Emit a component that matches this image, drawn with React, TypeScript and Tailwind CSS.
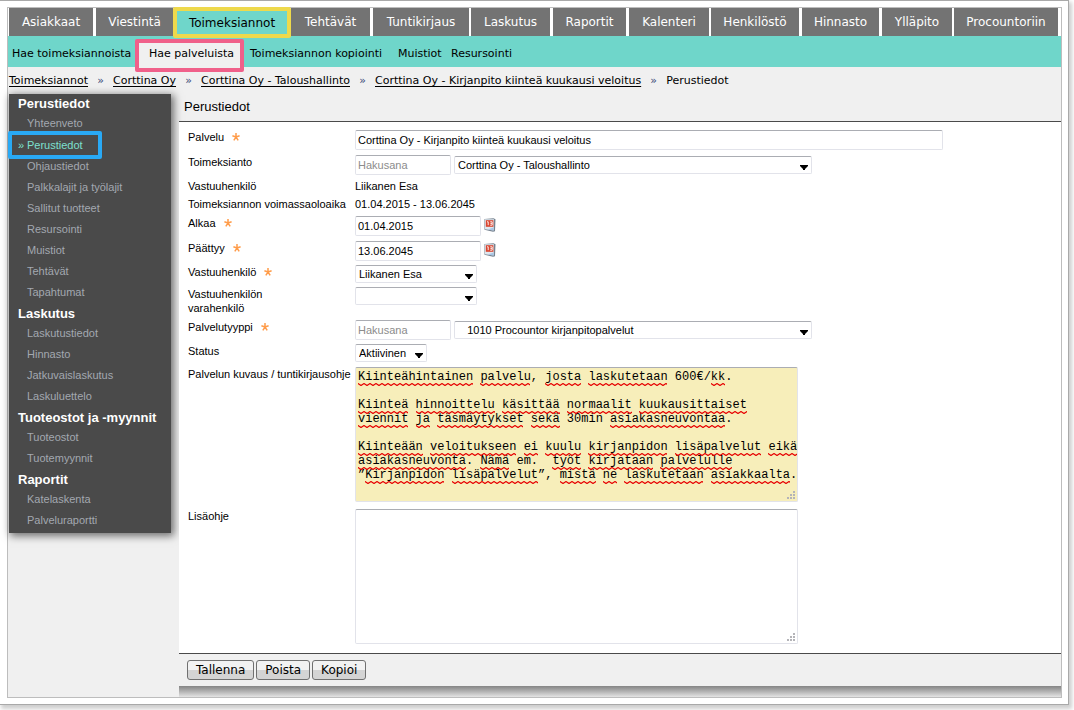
import { useState } from 'react'

interface MenuGroup {
  title: string
  items: string[]
}

const tabs = [
  { label: 'Asiakkaat', width: 'w-[84px] mr-[3px]' },
  { label: 'Viestintä', width: 'w-[77px]' },
  { label: 'Toimeksiannot', width: 'w-[118px]' },
  { label: 'Tehtävät', width: 'w-[79px] mr-[3px]' },
  { label: 'Tuntikirjaus', width: 'w-[96px] mr-[2px]' },
  { label: 'Laskutus', width: 'w-[79px] mr-[3px]' },
  { label: 'Raportit', width: 'w-[73px] mr-[3px]' },
  { label: 'Kalenteri', width: 'w-[80px] mr-[2px]' },
  { label: 'Henkilöstö', width: 'w-[88px] mr-[3px]' },
  { label: 'Hinnasto', width: 'w-[77px] mr-[3px]' },
  { label: 'Ylläpito', width: 'w-[70px] mr-[2px]' },
  { label: 'Procountoriin', width: 'w-[104px] mr-[3px]' },
]

const crumbs = [
  'Toimeksiannot',
  'Corttina Oy',
  'Corttina Oy - Taloushallinto',
  'Corttina Oy - Kirjanpito kiinteä kuukausi veloitus',
]

const menu: MenuGroup[] = [
  {
    title: 'Perustiedot',
    items: [
      'Yhteenveto',
      'Perustiedot',
      'Ohjaustiedot',
      'Palkkalajit ja työlajit',
      'Sallitut tuotteet',
      'Resursointi',
      'Muistiot',
      'Tehtävät',
      'Tapahtumat',
    ],
  },
  { title: 'Laskutus', items: ['Laskutustiedot', 'Hinnasto', 'Jatkuvaislaskutus', 'Laskuluettelo'] },
  { title: 'Tuoteostot ja -myynnit', items: ['Tuoteostot', 'Tuotemyynnit'] },
  { title: 'Raportit', items: ['Katelaskenta', 'Palveluraportti'] },
]

const description = `Kiinteähintainen palvelu, josta laskutetaan 600€/kk.

Kiinteä hinnoittelu käsittää normaalit kuukausittaiset
viennit ja täsmäytykset sekä 30min asiakasneuvontaa.

Kiinteään veloitukseen ei kuulu kirjanpidon lisäpalvelut eikä
asiakasneuvonta. Nämä em.  työt kirjataan palvelulle
”Kirjanpidon lisäpalvelut”, mistä ne laskutetaan asiakkaalta.`

const verdana = "font-['DejaVu_Sans',Verdana,sans-serif]"
const field = 'rounded-[2px] border border-[#e2e3ea] border-t-[#abadb3] bg-white text-[11px] text-black'

// words the spell checker lets through
const knownWords = ['em', 'min']

function Squiggles({ text }: { text: string }) {
  const words = text.split('\n').flatMap((line, row) =>
    [...line.matchAll(/[a-zåäö]+/gi)]
      .filter((m) => !knownWords.includes(m[0]))
      .map((m) => ({ row, col: m.index, length: m[0].length }))
  )
  return (
    <svg className="pointer-events-none absolute inset-0 h-full w-full" aria-hidden="true">
      <defs>
        <pattern id="wave" width="6" height="3" patternUnits="userSpaceOnUse">
          <path d="M-1 0L0 .5L3 2.5L6 .5L7 0" fill="none" stroke="#e60000" strokeWidth="1.2" />
        </pattern>
      </defs>
      {words.map((w) => (
        <svg key={`${w.row}-${w.col}`} x={Math.round(3 + w.col * 7.2)} y={16 + w.row * 14} width={Math.round(w.length * 7.2)} height="3">
          <rect width="100%" height="3" fill="url(#wave)" />
        </svg>
      ))}
    </svg>
  )
}

function Grip() {
  return (
    <svg className="pointer-events-none absolute right-[3px] bottom-[3px]" width="8" height="8" fill="#b4b4b8" aria-hidden="true">
      <path d="M6 0h2v2H6zM3 3h2v2H3zM6 3h2v2H6zM0 6h2v2H0zM3 6h2v2H3zM6 6h2v2H6z" />
    </svg>
  )
}

function CalendarIcon() {
  return (
    <svg width="12" height="14" viewBox="0 0 12 14" aria-hidden="true">
      <path d="M.5 1L9.5 .3L11.5 1.2L11 13.2L9 13.8L.5 11.8Z" fill="#76828f" />
      <path d="M1 1.3L10 1.2L9.7 12.6L1 11.2Z" fill="#dfe7ef" />
      <path d="M1.8 2.2H9.4V8.8H1.8Z" fill="#d9452f" />
      <path d="M3 3.8H4.2V7.2M6.2 3.8H8.2V5.4H6.4M8.2 5.4V7.2H6.2" fill="none" stroke="#fff" strokeWidth="0.9" />
      <path d="M3.5 11.5L9.6 9.6V12.5Z" fill="#a8c6e6" />
    </svg>
  )
}

function Label({ htmlFor, required, wrap, children }: { htmlFor: string; required?: boolean; wrap?: boolean; children: string }) {
  return (
    <label htmlFor={htmlFor} className={`w-[167px] shrink-0 leading-[14px] ${wrap ? 'pr-[50px]' : 'whitespace-nowrap'}`}>
      {children}
      {required && (
        <svg className="mt-[3px] ml-[8px] inline-block align-top" width="8" height="8" viewBox="0 0 8 8" role="img" aria-label="pakollinen">
          <path d="M4 0V4M.4 2.8L4 4L7.6 2.8M1.8 7.3L4 4L6.2 7.3" fill="none" stroke="#ff9c4a" strokeWidth="1.5" />
        </svg>
      )}
    </label>
  )
}

function Select({ id, options, className }: { id: string; options: string[]; className: string }) {
  return (
    <div className={`relative h-[18px] ${className}`}>
      <select id={id} className={`${field} block h-full w-full appearance-none pr-3 pl-[3px] leading-[16px]`}>
        {options.map((o) => (
          <option key={o}>{o}</option>
        ))}
      </select>
      <svg className="pointer-events-none absolute right-[4px] bottom-[4px]" width="8" height="5" aria-hidden="true">
        <path d="M0 0H8V1L5 4V5H3V4L0 1Z" />
      </svg>
    </div>
  )
}

export default function App() {
  const [text, setText] = useState(description)

  return (
    <div className="bg-white pr-[5px] pb-[5px] font-['Liberation_Sans',Arial,sans-serif] text-[11px] text-black">
      <div className="border border-l-0 border-[#a9a9a9] bg-white pt-[6px] pr-[6px] pb-[6px] pl-[7px] shadow-[2px_3px_4px_1px_#cfcfcf]">
        <div className="border border-[#bdbdbd] bg-[#f0f0f0]">
          <nav className={`flex bg-white pl-px text-[12px] text-white ${verdana}`}>
            {tabs.map((tab) =>
              tab.label === 'Toimeksiannot' ? (
                <a
                  key={tab.label}
                  href="#"
                  className={`${tab.width} relative -mt-px -mb-[2px] flex h-[31px] shrink-0 items-center justify-center rounded-[2px] border-4 border-[#eed94c] bg-[#6fd6ca] text-black`}
                >
                  {tab.label}
                </a>
              ) : (
                <a key={tab.label} href="#" className={`${tab.width} flex h-[28px] shrink-0 items-center justify-center bg-[#737373]`}>
                  {tab.label}
                </a>
              )
            )}
            <span className="grow bg-[#737373]" />
          </nav>

          <nav className={`flex h-[31px] items-center bg-[#6fd6ca] pt-[5px] pl-[4px] text-[11px] whitespace-nowrap ${verdana}`}>
            <a href="#" className="w-[123px]">Hae toimeksiannoista</a>
            <a
              href="#"
              className="relative -mt-[2px] -mb-[5px] flex h-[33px] w-[109px] items-center justify-center rounded-[2px] border-4 border-[#f0608a] bg-[#f0f0f0] pb-[3px] pl-1"
            >
              Hae palveluista
            </a>
            <a href="#" className="ml-[6px] w-[148px]">Toimeksiannon kopiointi</a>
            <a href="#" className="w-[53px]">Muistiot</a>
            <a href="#">Resursointi</a>
          </nav>

          <nav className={`flex h-[27px] items-center pt-[2px] pl-px text-[11px] whitespace-nowrap ${verdana}`}>
            {crumbs.map((crumb) => (
              <span key={crumb} className="flex">
                <a href="#" className="underline underline-offset-2">{crumb}</a>
                <span className="w-[25px] text-center text-[#3a4a78]">»</span>
              </span>
            ))}
            <span>Perustiedot</span>
          </nav>

          <div className="flex items-start">
            <aside className="ml-px w-[162px] shrink-0 bg-[#4a4a4a] pb-px shadow-[2px_2px_8px_1px_rgba(0,0,0,0.55)]">
              {menu.map((group) => (
                <section key={group.title} className="pt-px pb-px">
                  <h2 className="pl-[9px] text-[13px] leading-[18px] font-bold text-white">{group.title}</h2>
                  <ul>
                    {group.items.map((item, i) =>
                      group.title === 'Perustiedot' && i === 1 ? (
                        <li key={item} className="-my-[3px]">
                          <a href="#" className="-ml-px flex h-[28px] w-[94px] items-center rounded-[2px] border-4 border-[#29a9f5] pl-[6px] text-[#7de0cf]">
                            <span className="w-[9px]">»</span>
                            {item}
                          </a>
                        </li>
                      ) : (
                        <li key={item}>
                          <a href="#" className="block pl-[18px] leading-[21px] text-[#a3a8b0]">{item}</a>
                        </li>
                      )
                    )}
                  </ul>
                </section>
              ))}
            </aside>

            <main className="ml-[8px] min-w-0 grow">
              <h1 className="border-b border-[#4a4a4a] pb-[2px] pl-[5px] text-[13px] leading-[25px]">Perustiedot</h1>
              <form id="palvelulomake" className="bg-white pt-[8px] pb-[9px] pl-[9px]">
                <div className="flex h-[25px] items-start">
                  <Label htmlFor="palvelu" required>Palvelu</Label>
                  <input id="palvelu" className={`${field} h-[20px] w-[588px] px-[2px]`} defaultValue="Corttina Oy - Kirjanpito kiinteä kuukausi veloitus" />
                </div>
                <div className="flex h-[24px] items-start">
                  <Label htmlFor="toimeksianto">Toimeksianto</Label>
                  <input aria-label="Toimeksiannon hakusana" placeholder="Hakusana" className={`${field} h-[20px] w-[96px] px-[2px] placeholder:text-[#8c8c8c]`} />
                  <Select id="toimeksianto" className="mt-px ml-[3px] w-[358px]" options={['Corttina Oy - Taloushallinto']} />
                </div>
                <div className="flex h-[18px] items-start leading-[14px]">
                  <span className="w-[167px]">Vastuuhenkilö</span>
                  <span>Liikanen Esa</span>
                </div>
                <div className="flex h-[19px] items-start leading-[14px]">
                  <span className="w-[167px]">Toimeksiannon voimassaoloaika</span>
                  <span>01.04.2015 - 13.06.2045</span>
                </div>
                <div className="flex h-[25px] items-start">
                  <Label htmlFor="alkaa" required>Alkaa</Label>
                  <input id="alkaa" className={`${field} h-[20px] w-[126px] px-[2px]`} defaultValue="01.04.2015" />
                  <button type="button" aria-label="Valitse alkupäivä" className="ml-[3px] pt-[2px]"><CalendarIcon /></button>
                </div>
                <div className="flex h-[24px] items-start">
                  <Label htmlFor="paattyy" required>Päättyy</Label>
                  <input id="paattyy" className={`${field} h-[20px] w-[126px] px-[2px]`} defaultValue="13.06.2045" />
                  <button type="button" aria-label="Valitse loppupäivä" className="ml-[3px] pt-[2px]"><CalendarIcon /></button>
                </div>
                <div className="flex h-[22px] items-start">
                  <Label htmlFor="vastuu" required>Vastuuhenkilö</Label>
                  <Select id="vastuu" className="w-[122px]" options={['Liikanen Esa']} />
                </div>
                <div className="flex h-[33px] items-start">
                  <Label htmlFor="vara" wrap>Vastuuhenkilön varahenkilö</Label>
                  <Select id="vara" className="w-[122px]" options={['']} />
                </div>
                <div className="flex h-[24px] items-start">
                  <Label htmlFor="tyyppi" required>Palvelutyyppi</Label>
                  <input aria-label="Palvelutyypin hakusana" placeholder="Hakusana" className={`${field} h-[20px] w-[96px] px-[2px] placeholder:text-[#8c8c8c]`} />
                  <Select id="tyyppi" className="mt-px ml-[3px] w-[358px]" options={['\u00a0\u00a0\u00a01010 Procountor kirjanpitopalvelut']} />
                </div>
                <div className="flex h-[23px] items-start">
                  <Label htmlFor="status">Status</Label>
                  <Select id="status" className="w-[72px]" options={['Aktiivinen']} />
                </div>
                <div className="flex h-[142px] items-start">
                  <Label htmlFor="kuvaus">Palvelun kuvaus / tuntikirjausohje</Label>
                  <div className="relative h-[135px] w-[443px]">
                    <textarea
                      id="kuvaus"
                      wrap="off"
                      spellCheck={false}
                      value={text}
                      onChange={(e) => setText(e.target.value)}
                      className="block h-full w-full resize-none overflow-hidden rounded-[2px] border border-[#e2e3ea] border-t-[#abadb3] bg-[#f7eeba] px-[2px] py-[2px] font-['Liberation_Mono',monospace] text-[12px] leading-[14px]"
                    />
                    <Squiggles text={text} />
                    <Grip />
                  </div>
                </div>
                <div className="flex items-start">
                  <Label htmlFor="lisaohje">Lisäohje</Label>
                  <div className="relative h-[135px] w-[443px]">
                    <textarea id="lisaohje" className={`${field} block h-full w-full resize-none`} />
                    <Grip />
                  </div>
                </div>
              </form>
              <footer className={`flex gap-[2px] border-t border-[#4a4a4a] pt-[6px] pb-[6px] pl-[8px] text-[12px] ${verdana}`}>
                {['Tallenna', 'Poista', 'Kopioi'].map((name) => (
                  <button
                    key={name}
                    type="button"
                    form="palvelulomake"
                    className="h-[20px] rounded-[3px] border border-[#707070] bg-linear-to-b from-[#f2f2f2] from-50% to-[#d4d4d4] to-50% px-[8px] leading-[17px]"
                  >
                    {name}
                  </button>
                ))}
              </footer>
              <div className="h-[11px] bg-linear-to-b from-[#858585] to-[#e4e4e4]" />
            </main>
          </div>
        </div>
      </div>
    </div>
  )
}
